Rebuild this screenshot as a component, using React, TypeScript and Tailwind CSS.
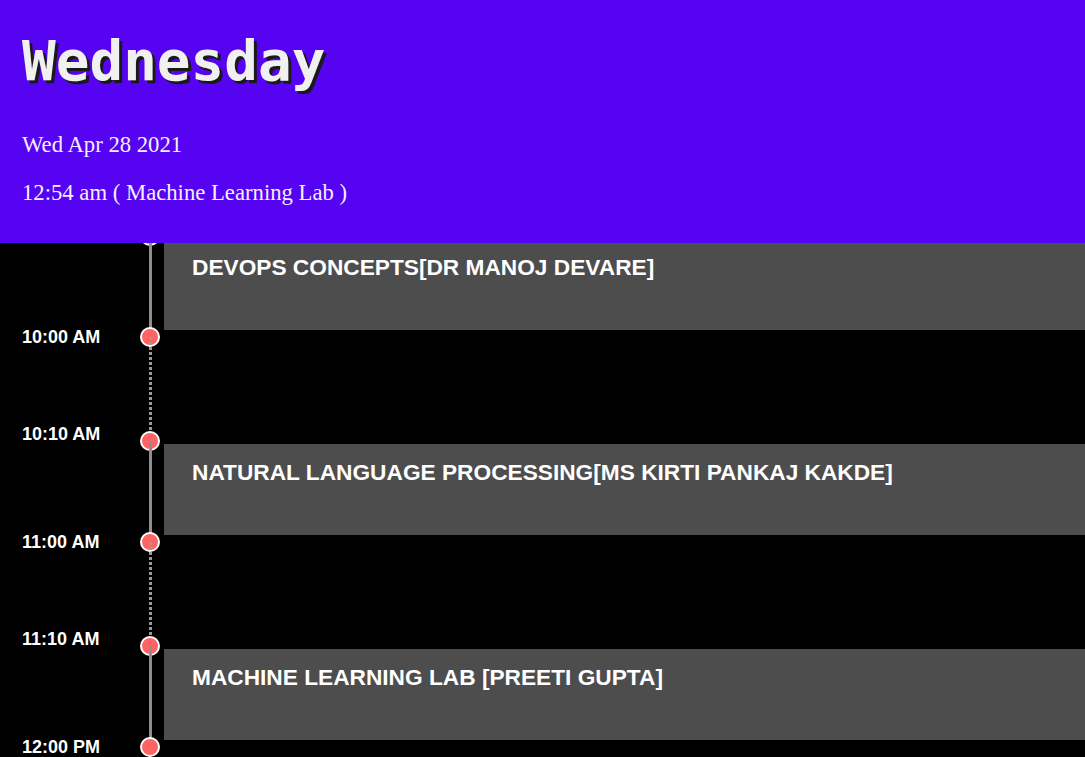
import React from "react";

type Slot = { start: string; end: string; title: string };

const slots: Slot[] = [
  { start: "09:10 AM", end: "10:00 AM", title: "DEVOPS CONCEPTS[DR MANOJ DEVARE]" },
  { start: "10:10 AM", end: "11:00 AM", title: "NATURAL LANGUAGE PROCESSING[MS KIRTI PANKAJ KAKDE]" },
  { start: "11:10 AM", end: "12:00 PM", title: "MACHINE LEARNING LAB [PREETI GUPTA]" },
];

function Dot({ label, lift }: { label: string; lift?: boolean }) {
  return (
    <div className="flex h-0 items-center">
      <div className={`w-[140px] pl-[22px] ${lift ? "mb-[14px]" : ""}`}>
        <span className="text-[18px] font-bold leading-[20px] text-white [font-family:'Liberation_Sans',Arial,sans-serif]">
          {label}
        </span>
      </div>
      <div className="h-[20px] w-[20px] shrink-0 rounded-full border-2 border-white bg-[#ff6363]" />
    </div>
  );
}

function Segment({ title, dotted }: { title?: string; dotted?: boolean }) {
  return (
    <div className={`flex ${dotted ? "h-[104px]" : "h-[101px]"}`}>
      <div className="w-[140px] shrink-0" />
      <div className="flex w-[20px] shrink-0 justify-center">
        {dotted ? (
          <div className="h-full w-[3px] bg-[repeating-linear-gradient(to_bottom,#9a9a9a_0,#9a9a9a_3px,transparent_3px,transparent_5px)]" />
        ) : (
          <div className="h-full w-[3px] bg-[#8e8e8e]" />
        )}
      </div>
      {title && (
        <div className="ml-[4px] flex-1 pt-[3px]">
          <div className="h-[91px] bg-[#4d4d4d] pl-[28px] pt-[15px]">
            <h3 className="text-[22.7px] font-bold leading-[27px] text-white [font-family:'Liberation_Sans',Arial,sans-serif]">
              {title}
            </h3>
          </div>
        </div>
      )}
    </div>
  );
}

export default function App() {
  return (
    <div className="min-h-screen bg-black">
      {/* fixed day header */}
      <header className="fixed inset-x-0 top-0 z-10 h-[243px] bg-[#5503f0] px-[22px] pt-[33px]">
        <h1 className="text-[56px] font-bold leading-[56px] text-[#f0f0f0] [font-family:'DejaVu_Sans_Mono',monospace] [text-shadow:3px_3px_0_#1a1a1a]">
          Wednesday
        </h1>
        <p className="mt-[43px] text-[22.7px] leading-[26px] text-[#f4efff] [font-family:'Liberation_Serif','Times_New_Roman',serif]">
          Wed Apr 28 2021
        </p>
        <p className="mt-[22px] text-[22.7px] leading-[26px] text-[#f4efff] [font-family:'Liberation_Serif','Times_New_Roman',serif]">
          12:54 am ( Machine Learning Lab )
        </p>
      </header>

      {/* timeline */}
      <div className="pt-[236px] pb-[40px]">
        {slots.map((s, i) => (
          <div key={s.start}>
            {i > 0 && <Segment dotted />}
            <Dot label={s.start} lift />
            <Segment title={s.title} />
            <Dot label={s.end} />
          </div>
        ))}
      </div>
    </div>
  );
}
